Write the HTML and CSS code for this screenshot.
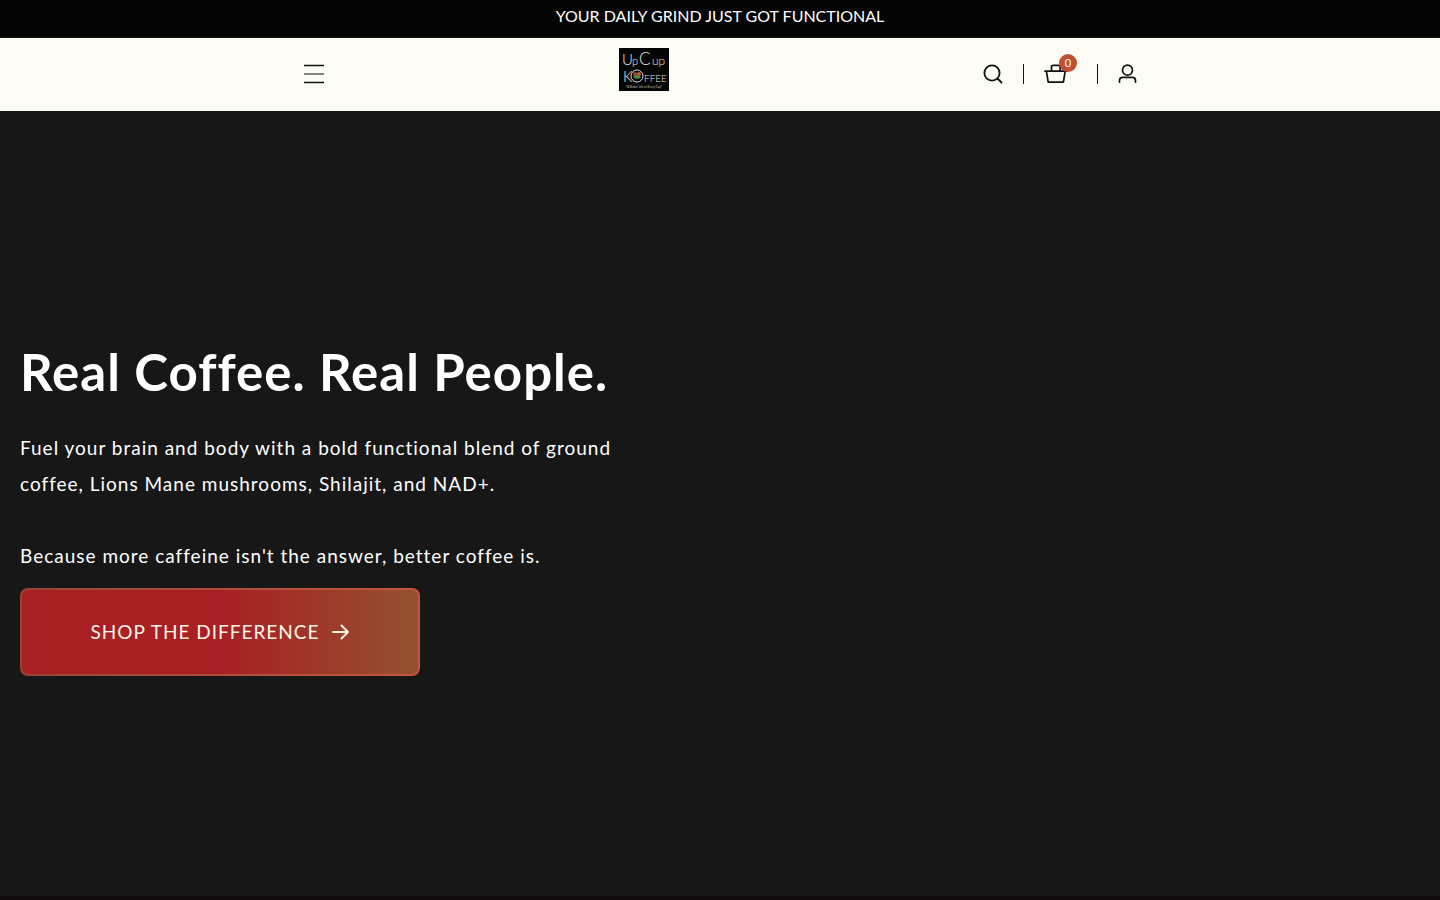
FILE: index.html
```
<!DOCTYPE html>
<html lang="en">
<head>
  <meta charset="UTF-8" />
  <meta name="viewport" content="width=device-width, initial-scale=1.0"/>
  <title>Up Cup Koffee</title>
  <link rel="stylesheet" href="styles.css">
</head>
<body>
  <div class="announcement">YOUR DAILY GRIND JUST GOT FUNCTIONAL</div>

  <header class="header">
    <div class="header-inner">
      <button class="icon-btn menu-btn" type="button" aria-label="Menu">
        <svg width="22" height="20" viewBox="0 0 22 20" fill="none" stroke="#111">
          <path d="M2 1.5h20M2 18.5h20" stroke-width="1.3"/>
          <path d="M2 10h20" stroke="#85857f" stroke-width="2"/>
        </svg>
      </button>

      <a class="logo" href="#" aria-label="Up Cup Koffee">
        <svg width="50" height="43" viewBox="0 0 50 43">
          <rect width="50" height="43" fill="#050505"/>
          <g class="logo-text">
            <text x="3" y="17" font-size="15">U</text>
            <text x="13" y="17" font-size="11">p</text>
            <text x="20" y="17" font-size="17">C</text>
            <text x="33" y="17" font-size="12">up</text>
            <text x="4" y="34" font-size="15">K</text>
            <text x="25" y="34" font-size="10">FFEE</text>
          </g>
          <ellipse cx="18" cy="28" rx="6" ry="6" fill="none" stroke="#ddd"/>
          <circle cx="16" cy="26" r="2" fill="#a94435"/>
          <circle cx="20" cy="26" r="2" fill="#b8613b"/>
          <path d="M14 29q4-4 8 0q-4 4-8 0" fill="#4d8a3c"/>
          <text class="logo-tagline" x="25" y="40" font-size="3" text-anchor="middle">"A Better Life in Every Cup"</text>
        </svg>
      </a>

      <nav class="actions" aria-label="Account">
        <button class="icon-btn" type="button" aria-label="Search">
          <svg width="20" height="20" viewBox="0 0 20 20" fill="none" stroke="#111" stroke-width="1.8" stroke-linecap="round">
            <circle cx="9" cy="9" r="7.6"/>
            <path d="M14.5 14.5l4 4"/>
          </svg>
        </button>
        <span class="divider"></span>
        <a class="cart" href="#" aria-label="Cart">
          <svg width="24" height="20" viewBox="0 0 24 20" fill="none" stroke="#111" stroke-width="1.7" stroke-linejoin="round" stroke-linecap="round">
            <path d="M1 7.2h21.5M2.4 7.2l1.8 11h15.2l1.8-11M7.5 7V3q0-1.7 1.7-1.7h5.2q1.7 0 1.7 1.7v4"/>
          </svg>
          <span class="cart-count">0</span>
        </a>
        <span class="divider"></span>
        <a class="icon-btn" href="#" aria-label="Log in">
          <svg width="20" height="20" viewBox="0 0 20 20" fill="none" stroke="#111" stroke-width="1.7" stroke-linecap="round">
            <circle cx="9.5" cy="6.2" r="5"/>
            <path d="M1.5 18.2v-1.6q0-3.2 3.2-3.2h9.6q3.2 0 3.2 3.2v1.6"/>
          </svg>
        </a>
      </nav>
    </div>
  </header>

  <main class="hero">
    <div class="hero-content">
      <h1>Real Coffee. Real People.</h1>
      <p>Fuel your brain and body with a bold functional blend of ground coffee, Lions Mane mushrooms, Shilajit, and NAD+.</p>
      <p>Because more caffeine isn't the answer, better coffee is.</p>
      <a class="shop-btn" href="#">
        SHOP THE DIFFERENCE
        <svg width="18" height="16" viewBox="0 0 18 16" fill="none" stroke="#fff5e6" stroke-width="2" stroke-linecap="round" stroke-linejoin="round">
          <path d="M1 8h15M9.5 1.5L16 8l-6.5 6.5"/>
        </svg>
      </a>
    </div>
  </main>
</body>
</html>
```

FILE: styles.css
```
* {
  box-sizing: border-box;
}
body {
  margin: 0;
  background: #12090d;
  color: #fff;
  font-family: Lato, sans-serif;
}
.announcement {
  height: 38px;
  background: #050505;
  border-bottom: 1px solid #141414;
  font-size: 16px;
  line-height: 32px;
  text-align: center;
}
.header {
  background: #fcfcf4;
  padding: 10px 20px 20px;
}
.header-inner {
  display: grid;
  grid-template-columns: 2fr auto 3fr;
  align-items: center;
  max-width: 836px;
  margin: 0 auto;
}
.icon-btn {
  display: block;
  padding: 0;
  background: none;
  border: none;
  cursor: pointer;
}
.menu-btn {
  justify-self: start;
  padding-top: 8px;
}
.logo {
  margin-left: 4px;
}
.icon-btn svg,
.logo svg,
.cart svg {
  display: block;
}
.logo-text {
  fill: #e4e4e4;
  font-family: Lato, sans-serif;
  font-weight: 300;
}
.logo-tagline {
  fill: #c8c8c8;
  font-family: Lato, sans-serif;
}
.actions {
  display: flex;
  align-items: center;
  justify-content: flex-end;
  gap: 20px;
  padding-top: 8px;
}
.divider {
  width: 1px;
  height: 20px;
  background: #111;
}
.cart {
  position: relative;
  padding-right: 9px;
}
.cart-count {
  position: absolute;
  top: -10px;
  right: 0;
  width: 18px;
  height: 18px;
  border-radius: 50%;
  background: #c04f32;
  color: #fff;
  font-size: 11px;
  line-height: 18px;
  text-align: center;
}
.hero {
  display: flex;
  align-items: center;
  min-height: calc(100vh - 115px);
  padding: 30px 20px 20px;
  background: #171717;
}
.hero-content {
  max-width: 620px;
}
h1 {
  margin: 0 0 28px;
  font-size: 51px;
  line-height: 60px;
  letter-spacing: 1px;
}
p {
  margin: 0 0 36px;
  font-size: 19px;
  line-height: 36px;
  letter-spacing: 1px;
}
.shop-btn {
  display: flex;
  align-items: center;
  justify-content: center;
  gap: 12px;
  max-width: 400px;
  height: 88px;
  margin-top: -22px;
  border: 2px solid transparent;
  border-radius: 8px;
  background:
    linear-gradient(90deg, #a81f24 50%, #935130) padding-box,
    linear-gradient(90deg, #984535, #c8553b) border-box;
  color: #fff5e6;
  font-size: 19px;
  letter-spacing: 1px;
  text-decoration: none;
}
```
